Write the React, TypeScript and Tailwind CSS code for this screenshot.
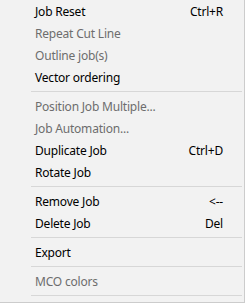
import React from 'react';

type Item = { label: string; shortcut?: string; disabled?: boolean } | 'sep';

const items: Item[] = [
  { label: 'Job Reset', shortcut: 'Ctrl+R' },
  { label: 'Repeat Cut Line', disabled: true },
  { label: 'Outline job(s)', disabled: true },
  { label: 'Vector ordering' },
  'sep',
  { label: 'Position Job Multiple...', disabled: true },
  { label: 'Job Automation...', disabled: true },
  { label: 'Duplicate Job', shortcut: 'Ctrl+D' },
  { label: 'Rotate Job' },
  'sep',
  { label: 'Remove Job', shortcut: '<--' },
  { label: 'Delete Job', shortcut: 'Del' },
  'sep',
  { label: 'Export' },
  'sep',
  { label: 'MCO colors', disabled: true },
  'sep',
];

const App: React.FC = () => {
  return (
    <div
      className="w-[245px] h-[303px] overflow-hidden bg-[#f2f2f2] border-r border-b border-[#cccccc] text-[12px] leading-[20px] tracking-[-0.2px] select-none"
      style={{ fontFamily: '"Noto Sans", "Liberation Sans", sans-serif' }}
    >
      {items.map((item, i) =>
        item === 'sep' ? (
          <div key={i} className="h-[7px] flex items-center">
            <div className="ml-[31px] mr-[2px] h-px flex-1 bg-[#d7d7d7]"></div>
          </div>
        ) : (
          <div
            key={i}
            className={`h-[22px] flex items-start justify-between pt-[2px] pl-[35px] pr-[21px] ${
              item.disabled ? 'text-[#6d6d6d]' : 'text-black'
            }`}
          >
            <span>{item.label}</span>
            {item.shortcut && <span>{item.shortcut}</span>}
          </div>
        )
      )}
    </div>
  );
};

export default App;
